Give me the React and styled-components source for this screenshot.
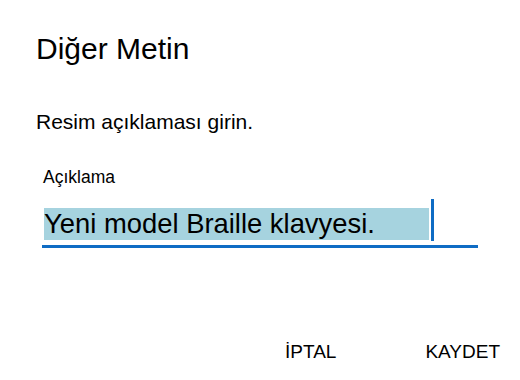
import styled, { createGlobalStyle } from "styled-components";

const GlobalStyle = createGlobalStyle`
  html, body {
    margin: 0;
    padding: 0;
    background: #ffffff;
  }
  body {
    font-family: "Liberation Sans", Arial, sans-serif;
    color: #000000;
  }
`;

const accent = "#0f6cc4";

const Dialog = styled.div`
  width: 520px;
  height: 380px;
  box-sizing: border-box;
  padding: 31px 0 0 36px;
  display: flex;
  flex-direction: column;
`;

const Title = styled.h1`
  margin: 0;
  font-size: 30px;
  font-weight: 400;
  line-height: 36px;
`;

const Description = styled.p`
  margin: 43px 0 0;
  font-size: 21px;
  line-height: 24px;
`;

const FieldGroup = styled.div`
  margin: 33px 0 0 6px;
  width: 436px;
`;

const Label = styled.label`
  display: block;
  padding-left: 1px;
  font-size: 17.5px;
  line-height: 20px;
`;

const Field = styled.div`
  margin-top: 12px;
  height: 46px;
  display: flex;
  align-items: flex-start;
  border-bottom: 3px solid ${accent};
`;

const Selected = styled.span`
  margin: 9px 0 0 2px;
  width: 385px;
  height: 32px;
  background: #a6d3df;
  font-size: 27.4px;
  line-height: 32px;
  white-space: nowrap;
`;

const Caret = styled.span`
  margin-left: 2px;
  width: 3px;
  height: 42px;
  background: ${accent};
`;

const Footer = styled.div`
  margin-top: 93px;
  display: flex;
  justify-content: flex-end;
  gap: 89px;
  padding-right: 20px;
`;

const Button = styled.button`
  border: 0;
  padding: 0;
  background: none;
  font-family: inherit;
  font-size: 19px;
  line-height: 22px;
  color: #000000;
  cursor: pointer;
`;

const App = () => {
  return (
    <>
      <GlobalStyle />
      <Dialog>
        <Title>Diğer Metin</Title>
        <Description>Resim açıklaması girin.</Description>
        <FieldGroup>
          <Label>Açıklama</Label>
          <Field>
            <Selected>Yeni model Braille klavyesi.</Selected>
            <Caret />
          </Field>
        </FieldGroup>
        <Footer>
          <Button>İPTAL</Button>
          <Button>KAYDET</Button>
        </Footer>
      </Dialog>
    </>
  );
};

export default App;
